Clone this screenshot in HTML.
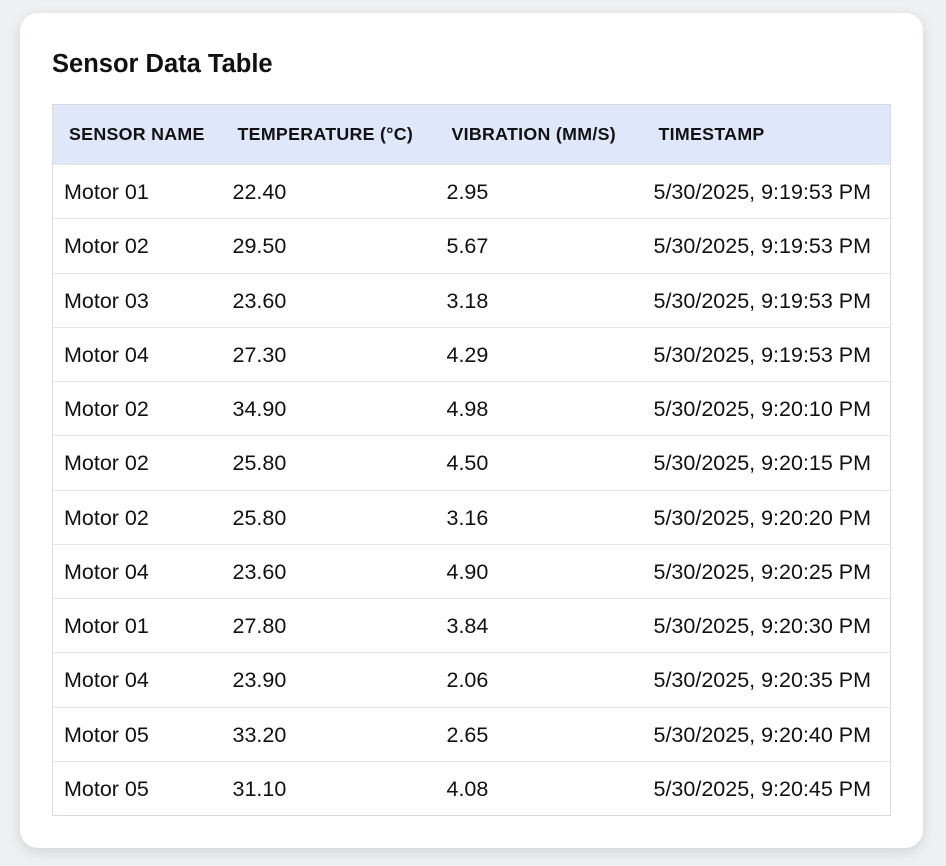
<!DOCTYPE html>
<html><head><meta charset="utf-8"><style>
html,body{margin:0;padding:0;background:#eff0f2;width:946px;height:866px;overflow:hidden;font-family:"Liberation Sans",Arial,sans-serif;}
.card{position:absolute;left:20px;top:13px;width:903px;height:835px;background:#fff;border-radius:18px;box-shadow:0 4px 14px rgba(0,0,0,0.12);}
h2{position:absolute;left:32px;top:37px;margin:0;font-size:25.5px;font-weight:bold;color:#111;}
table{position:absolute;left:32px;top:91px;width:839px;border-collapse:collapse;border:1px solid #d8dbe0;table-layout:fixed;}
th{background:#e0e7fb;height:60px;text-align:left;font-size:17.8px;font-weight:bold;color:#111;padding:0 0 0 16px;letter-spacing:0.3px;box-sizing:border-box;}
td{height:54.25px;border-top:1px solid #e3e5e8;font-size:21.5px;color:#111;padding:2px 0 0 11px;box-sizing:border-box;}
</style></head><body>
<div class="card">
<h2>Sensor Data Table</h2>
<table>
<colgroup><col style="width:169px"><col style="width:214px"><col style="width:207px"><col></colgroup>
<tr><th>SENSOR NAME</th><th>TEMPERATURE (°C)</th><th>VIBRATION (MM/S)</th><th>TIMESTAMP</th></tr>
<tr><td>Motor 01</td><td>22.40</td><td>2.95</td><td>5/30/2025, 9:19:53 PM</td></tr>
<tr><td>Motor 02</td><td>29.50</td><td>5.67</td><td>5/30/2025, 9:19:53 PM</td></tr>
<tr><td>Motor 03</td><td>23.60</td><td>3.18</td><td>5/30/2025, 9:19:53 PM</td></tr>
<tr><td>Motor 04</td><td>27.30</td><td>4.29</td><td>5/30/2025, 9:19:53 PM</td></tr>
<tr><td>Motor 02</td><td>34.90</td><td>4.98</td><td>5/30/2025, 9:20:10 PM</td></tr>
<tr><td>Motor 02</td><td>25.80</td><td>4.50</td><td>5/30/2025, 9:20:15 PM</td></tr>
<tr><td>Motor 02</td><td>25.80</td><td>3.16</td><td>5/30/2025, 9:20:20 PM</td></tr>
<tr><td>Motor 04</td><td>23.60</td><td>4.90</td><td>5/30/2025, 9:20:25 PM</td></tr>
<tr><td>Motor 01</td><td>27.80</td><td>3.84</td><td>5/30/2025, 9:20:30 PM</td></tr>
<tr><td>Motor 04</td><td>23.90</td><td>2.06</td><td>5/30/2025, 9:20:35 PM</td></tr>
<tr><td>Motor 05</td><td>33.20</td><td>2.65</td><td>5/30/2025, 9:20:40 PM</td></tr>
<tr><td>Motor 05</td><td>31.10</td><td>4.08</td><td>5/30/2025, 9:20:45 PM</td></tr>
</table>
</div>
</body></html>
